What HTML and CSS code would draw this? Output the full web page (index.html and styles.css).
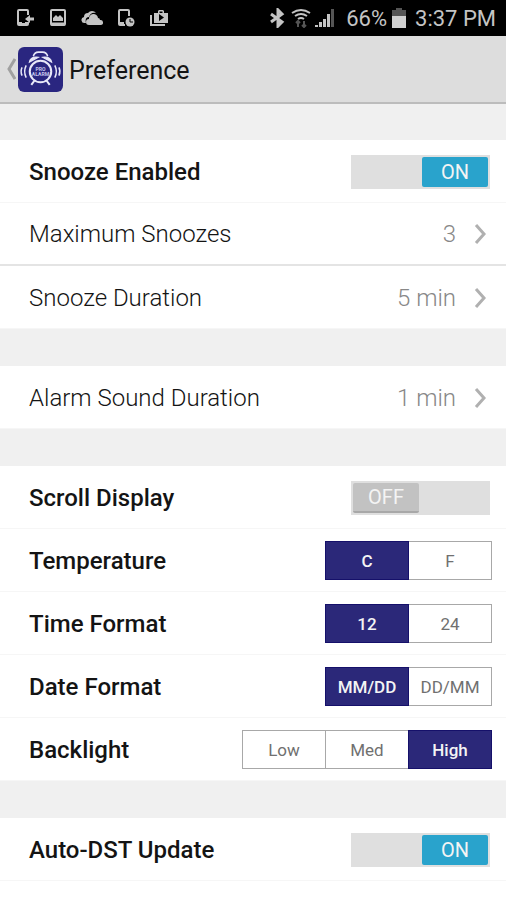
FILE: index.html
```html
<!DOCTYPE html>
<html lang="en">
<head>
<meta charset="utf-8">
<meta name="viewport" content="width=device-width, initial-scale=1">
<title>Preference</title>
<link rel="stylesheet" href="styles.css">
</head>
<body>
<div class="status">
  <div class="status-left">
    <svg width="20" height="20" viewBox="0 0 20 20" fill="none" stroke="currentColor" stroke-width="2"><path d="M13 7V3q0-1-1-1H4Q3 2 3 3v13q0 1 1 1h8q1 0 1-1v-2"/><path d="M3 14h4v1h3v-1h3v3H3z" fill="currentColor" stroke="none"/><path d="M19 11h-5" stroke-width="3"/><path d="M15 7l-5 4 5 4z" fill="currentColor" stroke="none"/></svg>
    <svg width="20" height="20" viewBox="0 0 20 20" fill="none" stroke="currentColor" stroke-width="2"><rect x="3" y="2" width="14" height="15" rx="1"/><path d="M3 16h14" stroke-width="3"/><path d="M5 13v-3l3-3 2 2 2-2 3 3v3z" fill="currentColor" stroke="none"/></svg>
    <svg width="22" height="20" viewBox="0 0 22 20" fill="currentColor"><path d="M5 15H4a3 3 0 0 1-1-6 4 4 0 0 1 4-4 5 5 0 0 1 8 0c-4-1-6 1-7 4-3 0-4 3-3 6z"/><path d="M8 17a3 3 0 0 1 0-6 4 4 0 0 1 9-1q2 0 2 2a2.500 2.500 0 0 1 1 5z"/></svg>
    <svg width="20" height="20" viewBox="0 0 20 20" fill="none" stroke="currentColor" stroke-width="2"><path d="M13 8V3q0-1-1-1H4Q3 2 3 3v13q0 1 1 1h5M3 15h5"/><circle cx="14" cy="14" r="4.500" fill="currentColor" stroke="none"/><path d="M14 11v3h3" stroke="#000" stroke-width="1"/></svg>
    <svg width="20" height="20" viewBox="0 0 20 20" fill="currentColor"><path d="M1 7v11h15v-2H3V7z"/><path fill-rule="evenodd" d="M5 5h4V3l1-1h4l1 1v2h4v10H5zM10.500 3.500V5h3V3.500zM10 6v7l5-3.500z"/></svg>
  </div>
  <div class="status-right">
    <svg width="15" height="20" viewBox="0 0 15 20" fill="none" stroke="currentColor" stroke-width="3"><path d="M1 6l11 8-4 4V2l4 4-11 8"/></svg>
    <svg class="wifi" width="20" height="20" viewBox="0 0 20 20" fill="none" stroke="currentColor" stroke-width="2"><path d="M1 5q9-6 18 0M4 8q6-4 12 0M7 11q3-2 6 0"/><path stroke="#555" d="M7 19v-6M5 15l2-2 2 2M13 13v6M11 17l2 2 2-2"/></svg>
    <svg class="signal" width="20" height="20" viewBox="0 0 20 20" fill="currentColor"><path d="M0 19v-2h3v2zM4 19v-5h3v5zM8 19v-8h3v8zM12 19V6h3v13z"/><path fill="#555" d="M16 19V1h3v18z"/></svg>
    <span>66%</span>
    <svg class="battery" width="14" height="20" viewBox="0 0 14 20"><path fill="#555" d="M4 0h6v2h4v7H0V2h4z"/><path fill="#d0d0d0" d="M0 8h14v12H0z"/></svg>
    <time>3:37 PM</time>
  </div>
</div>
<header class="bar">
  <a class="up" href="#" aria-label="Back">
    <svg width="10" height="22" viewBox="0 0 10 22" fill="none" stroke="#a0a0a0" stroke-width="3"><path d="M9 1L3 11l6 10"/></svg>
    <svg class="logo" width="45" height="45" viewBox="0 0 44 44" fill="none" stroke="#e8e8f8" stroke-width="2">
      <rect width="44" height="44" rx="6" fill="#2a2680" stroke="none"/>
      <circle cx="22" cy="24" r="10.500"/>
      <path d="M11 15q1-6 9-5zM33 15q-1-6-9-5z" fill="#e8e8f8" stroke-width="1"/>
      <path d="M15 9q1-4 5-4h4q4 0 5 4" stroke-width="1.500"/>
      <path d="M16 33l-3 4M28 33l3 4"/>
      <path d="M8 18q-3 6 0 12M36 18q3 6 0 12M4 20q-2 4 0 8M40 20q2 4 0 8" stroke-width="1.500"/>
      <text x="22" y="23" class="logo-text">PRO</text><text x="22" y="28" class="logo-text">ALARM</text>
    </svg>
  </a>
  <h1>Preference</h1>
</header>
<main>
  <section class="group">
    <div class="row"><label class="name" for="snooze">Snooze Enabled</label>
      <label class="switch"><input type="checkbox" role="switch" id="snooze" checked><span class="knob on">ON</span><span class="knob off">OFF</span></label></div>
    <button class="row link ruled"><span>Maximum Snoozes</span><span class="value">3</span><svg width="14" height="20" viewBox="0 0 14 20"><path d="M2 1l8 9-8 9"/></svg></button>
    <button class="row link"><span>Snooze Duration</span><span class="value">5 min</span><svg width="14" height="20" viewBox="0 0 14 20"><path d="M2 1l8 9-8 9"/></svg></button>
  </section>
  <section class="group">
    <button class="row link"><span>Alarm Sound Duration</span><span class="value">1 min</span><svg width="14" height="20" viewBox="0 0 14 20"><path d="M2 1l8 9-8 9"/></svg></button>
  </section>
  <section class="group">
    <div class="row"><label class="name" for="scroll">Scroll Display</label>
      <label class="switch"><input type="checkbox" role="switch" id="scroll"><span class="knob on">ON</span><span class="knob off">OFF</span></label></div>
    <div class="row" role="radiogroup" aria-labelledby="temp"><span class="name" id="temp">Temperature</span>
      <div class="segments"><label><input type="radio" name="temp" checked>C</label><label><input type="radio" name="temp">F</label></div></div>
    <div class="row" role="radiogroup" aria-labelledby="time"><span class="name" id="time">Time Format</span>
      <div class="segments"><label><input type="radio" name="time" checked>12</label><label><input type="radio" name="time">24</label></div></div>
    <div class="row" role="radiogroup" aria-labelledby="date"><span class="name" id="date">Date Format</span>
      <div class="segments"><label><input type="radio" name="date" checked>MM/DD</label><label><input type="radio" name="date">DD/MM</label></div></div>
    <div class="row" role="radiogroup" aria-labelledby="light"><span class="name" id="light">Backlight</span>
      <div class="segments"><label><input type="radio" name="light">Low</label><label><input type="radio" name="light">Med</label><label><input type="radio" name="light" checked>High</label></div></div>
  </section>
  <section class="group last">
    <div class="row"><label class="name" for="dst">Auto-DST Update</label>
      <label class="switch"><input type="checkbox" role="switch" id="dst" checked><span class="knob on">ON</span><span class="knob off">OFF</span></label></div>
  </section>
</main>
</body>
</html>
```
FILE: styles.css
```css
* { box-sizing: border-box; }
body {
  margin: 0;
  min-height: 100vh;
  display: flex;
  flex-direction: column;
  background: #f0f0f0;
  color: #141414;
  font-family: Roboto, "Liberation Sans", sans-serif;
  font-size: 24px;
}
.status {
  height: 36px;
  padding: 0 10px 0 15px;
  display: flex;
  align-items: center;
  justify-content: space-between;
  background: #000;
  color: #c4c4c4;
  font-size: 22px;
}
.status-left { display: flex; gap: 13px; }
.status-right { display: flex; align-items: center; }
.status-right svg { flex: none; }
.wifi { margin: 0 4px 0 6px; }
.signal { margin-right: 11px; }
.battery { margin: 0 9px 0 5px; }
.bar {
  height: 68px;
  padding: 0 6px;
  display: flex;
  align-items: center;
  gap: 6px;
  background: #dddddd;
  border-bottom: 2px solid #bcbcbc;
}
.up { display: flex; align-items: center; gap: 2px; }
.logo-text { fill: #c8c6ee; stroke: none; font-size: 5px; font-weight: 700; text-anchor: middle; }
h1 { margin: 0; padding-top: 2px; font-size: 25px; font-weight: 400; }
main {
  flex: 1;
  display: flex;
  flex-direction: column;
  gap: 37px;
  padding-top: 36px;
}
.group { background: #fff; }
.last { flex: 1; }
.row {
  width: 100%;
  height: 63px;
  padding: 1px 14px 0 29px;
  display: flex;
  align-items: center;
  justify-content: space-between;
  background: #fff;
  border: 0;
  border-bottom: 1px solid #f6f6f6;
}
.link { font: inherit; font-weight: 300; color: #141414; text-align: left; padding-right: 18px; }
.ruled { border-bottom: 2px solid #e4e4e4; }
.name { font-weight: 500; }
.value { margin-left: auto; margin-right: 18px; color: #888; }
.link svg { fill: none; stroke: #b0b0b0; stroke-width: 3; }
.switch {
  width: 139px;
  height: 34px;
  margin-right: 2px;
  padding: 2px;
  display: flex;
  background: #dfdfdf;
}
.switch input, .segments input { appearance: none; width: 0; height: 0; margin: 0; }
.knob {
  width: 66px;
  display: flex;
  align-items: center;
  justify-content: center;
  border-radius: 2px;
  font-size: 20px;
  color: #f4f4f4;
}
.on { display: none; margin-left: auto; background: #29a3cc; }
.off { background: #c2c2c2; border-bottom: 2px solid #a8a8a8; }
input:checked ~ .on { display: flex; }
input:checked ~ .off { display: none; }
.segments { display: flex; }
.segments label {
  width: 84px;
  height: 39px;
  display: flex;
  align-items: center;
  justify-content: center;
  border: 1px solid #a8a8a8;
  font-size: 17px;
  color: #707070;
}
.segments label + label { margin-left: -1px; }
.segments label:has(:checked) {
  background: #2b2879;
  border-color: #15106a;
  color: #f4f4f4;
  font-weight: 500;
  z-index: 1;
}
```
